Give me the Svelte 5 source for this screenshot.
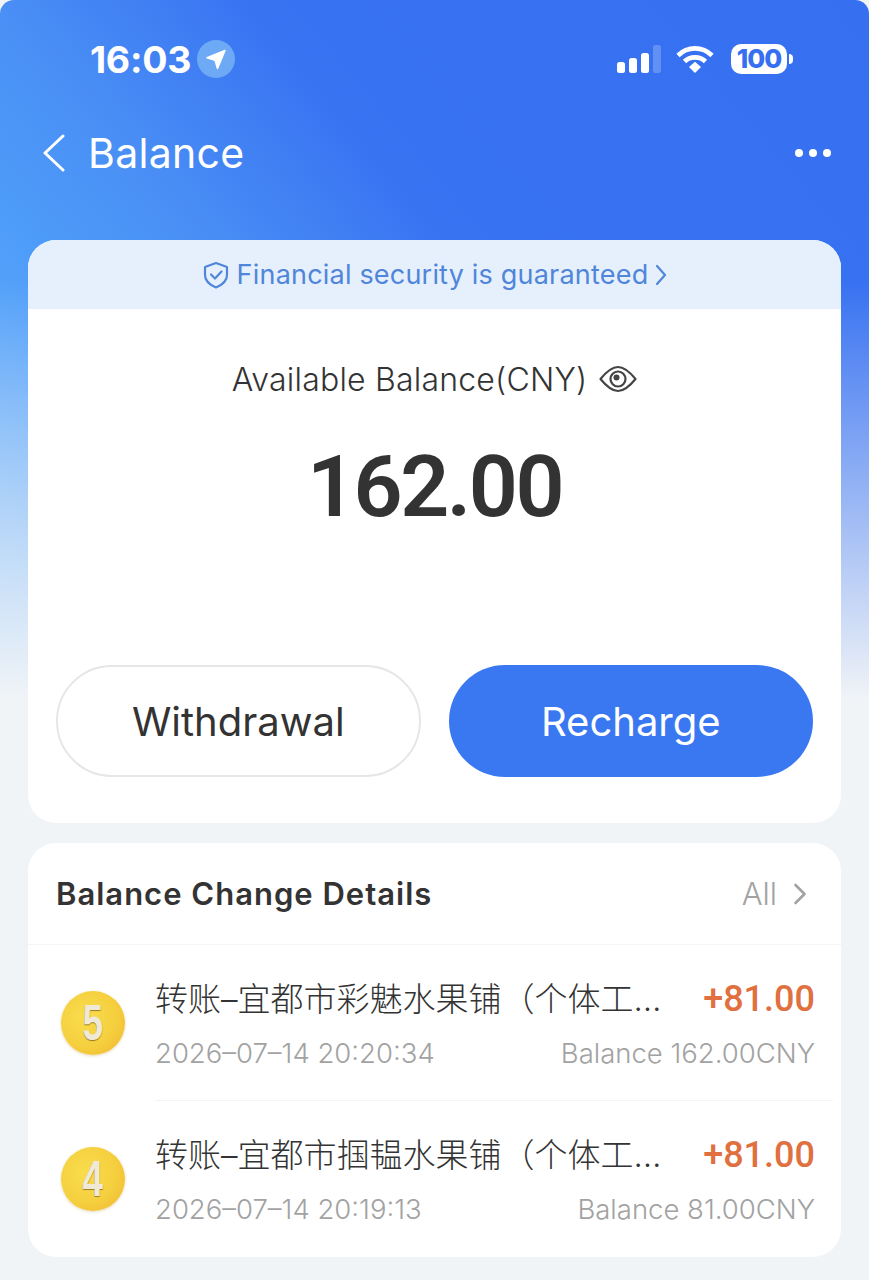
<script>
  const rows = [
    { n: '5', title: '转账–宜都市彩魅水果铺（个体工…', amount: '+81.00', time: '2026–07–14 20:20:34', bal: 'Balance 162.00CNY' },
    { n: '4', title: '转账–宜都市掴韫水果铺（个体工…', amount: '+81.00', time: '2026–07–14 20:19:13', bal: 'Balance 81.00CNY' }
  ];
</script>

<div class="page">
  <div class="status">
    <div class="left">
      <span class="time">16:03</span>
      <span class="loc">
        <svg width="38" height="38" viewBox="0 0 38 38"><circle cx="19" cy="19" r="19" fill="#6ea9f6"/><path d="M28 10.5 L10 17.8 L18 20.2 L20.5 28.5 Z" fill="#fff" stroke="#fff" stroke-width="1.5" stroke-linejoin="round"/></svg>
      </span>
    </div>
    <div class="right">
      <svg class="signal" width="44" height="28" viewBox="0 0 44 28">
        <rect x="0" y="17" width="8" height="11" rx="2.5" fill="#fff"/>
        <rect x="12" y="13" width="8" height="15" rx="2.5" fill="#fff"/>
        <rect x="24" y="8" width="8" height="20" rx="2.5" fill="#fff"/>
        <rect x="36" y="0" width="8" height="28" rx="2.5" fill="#fff" opacity=".22"/>
      </svg>
      <svg class="wifi" width="38" height="28" viewBox="0 0 38 28" fill="none" stroke="#fff" stroke-width="4.6">
        <path d="M2 10.5 C11.5 1 26.5 1 36 10.5"/>
        <path d="M8.5 16.5 C14 11 24 11 29.5 16.5"/>
        <path d="M13 22 L19 16.8 L25 22 L19 28 Z" fill="#fff" stroke="none"/>
      </svg>
      <div class="battery"><span>100</span></div>
      <span class="nub"></span>
    </div>
  </div>

  <div class="nav">
    <svg class="back" width="24" height="38" viewBox="0 0 24 38" fill="none" stroke="#fff" stroke-width="3" stroke-linecap="round" stroke-linejoin="round"><path d="M21 2 L3 19 L21 36"/></svg>
    <h1>Balance</h1>
    <div class="dots"><i></i><i></i><i></i></div>
  </div>

  <section class="card main">
    <div class="banner">
      <svg width="28" height="28" viewBox="0 0 28 28" fill="none" stroke="#4f86da" stroke-width="2.2" stroke-linejoin="round" stroke-linecap="round">
        <path d="M14 2 L25 6 V14 C25 20 20 24 14 26.5 C8 24 3 20 3 14 V6 Z"/>
        <path d="M9 13.5 L13 17.5 L19.5 10.5"/>
      </svg>
      <span>Financial security is guaranteed</span>
      <svg width="12" height="22" viewBox="0 0 12 22" fill="none" stroke="#4f86da" stroke-width="2.2" stroke-linecap="round" stroke-linejoin="round"><path d="M2 2 L10 11 L2 20"/></svg>
    </div>

    <div class="label">
      <span>Available Balance(CNY)</span>
      <svg width="38" height="30" viewBox="0 0 38 30" fill="none" stroke="#444" stroke-width="2.2" stroke-linejoin="round">
        <path d="M1.5 15 C8 7 14 3 19 3 C24 3 30 7 36.5 15 C30 23 24 27 19 27 C14 27 8 23 1.5 15 Z"/>
        <circle cx="19" cy="15" r="7.5"/>
        <circle cx="17.5" cy="13.5" r="3" fill="#444" stroke="none"/>
      </svg>
    </div>

    <div class="amount">162.00</div>

    <div class="actions">
      <button class="ghost">Withdrawal</button>
      <button class="solid">Recharge</button>
    </div>
  </section>

  <section class="card details">
    <div class="head">
      <h2>Balance Change Details</h2>
      <div class="all">
        <span>All</span>
        <svg width="14" height="24" viewBox="0 0 14 24" fill="none" stroke="#a2a2a2" stroke-width="2.6" stroke-linecap="round" stroke-linejoin="round"><path d="M2.5 3 L11.5 12 L2.5 21"/></svg>
      </div>
    </div>
    {#each rows as r, i}
      <div class="row">
        <div class="coin"><span>{r.n}</span></div>
        <div class="body" class:last={i === rows.length - 1}>
          <div class="line">
            <span class="title">{r.title}</span>
            <span class="plus">{r.amount}</span>
          </div>
          <div class="line sub">
            <span>{r.time}</span>
            <span>{r.bal}</span>
          </div>
        </div>
      </div>
    {/each}
  </section>
</div>

<style>
  :global(body) {
    margin: 0;
    background: #f1f4f7;
  }
  .page {
    box-sizing: border-box;
    width: 869px;
    height: 1280px;
    overflow: hidden;
    border-radius: 14px 14px 0 0;
    font-family: Inter, "Noto Sans CJK SC", sans-serif;
    color: #333;
    background:
      linear-gradient(180deg, rgba(241,244,247,0) 280px, rgba(241,244,247,1) 700px),
      linear-gradient(50deg, #6ab0fa 10%, #4d9cf9 31%, #4a8ff5 42%, #3873f2 59%, #3670f1 100%);
    background-size: 100% 100%, 100% 760px;
    background-repeat: no-repeat;
    background-color: #f1f4f7;
  }

  .status {
    height: 38px;
    padding: 40px 76px 0 90px;
    display: flex;
    align-items: center;
    justify-content: space-between;
    color: #fff;
  }
  .left { display: flex; align-items: center; gap: 6px; }
  .time { font-size: 37.5px; font-weight: 700; letter-spacing: -0.3px; }
  .loc { display: flex; }
  .right { display: flex; align-items: center; }
  .signal { margin-right: 15px; }
  .wifi { margin-right: 17px; }
  .battery {
    width: 56px;
    height: 30px;
    border-radius: 10px;
    background: #fff;
    display: flex;
    align-items: center;
    justify-content: center;
  }
  .battery span {
    color: #3670f0;
    font-size: 26px;
    font-weight: 800;
    letter-spacing: -1px;
    line-height: 30px;
  }
  .nub {
    width: 4px;
    height: 10px;
    margin-left: 2px;
    border-radius: 0 5px 5px 0;
    background: #fff;
  }

  .nav {
    height: 44px;
    margin-top: 53px;
    padding: 0 38px 0 42px;
    display: flex;
    align-items: center;
    color: #fff;
  }
  .back { margin-right: 22px; }
  h1 {
    margin: 0;
    flex: 1;
    font-size: 41px;
    font-weight: 400;
    letter-spacing: 0.3px;
  }
  .dots { display: flex; gap: 6px; }
  .dots i { width: 8px; height: 8px; border-radius: 50%; background: #fff; }

  .card {
    margin: 0 28px;
    background: #fff;
    border-radius: 28px;
    overflow: hidden;
  }
  .main {
    height: 583px;
    margin-top: 65px;
    display: flex;
    flex-direction: column;
  }
  .banner {
    height: 69px;
    flex: none;
    background: #e6effc;
    color: #4f86da;
    display: flex;
    align-items: center;
    justify-content: center;
    gap: 7px;
    font-size: 27px;
    letter-spacing: 0.2px;
  }
  .label {
    margin-top: 50px;
    height: 40px;
    display: flex;
    align-items: center;
    justify-content: center;
    gap: 12px;
    font-size: 32px;
    font-weight: 300;
    letter-spacing: 0.2px;
    color: #333;
  }
  .amount {
    margin-top: 48px;
    height: 80px;
    line-height: 80px;
    text-align: center;
    font-family: Roboto, sans-serif;
    font-size: 86px;
    font-weight: 600;
    letter-spacing: -2.5px;
    color: #333;
  }
  .actions {
    margin-top: 138px;
    padding: 0 28px;
    display: grid;
    grid-template-columns: 1fr 1fr;
    gap: 28px;
  }
  button {
    height: 112px;
    border-radius: 56px;
    font-family: inherit;
    font-size: 40px;
    font-weight: 400;
    padding: 0;
  }
  .ghost {
    background: #fff;
    border: 2px solid #e6e6e6;
    color: #333;
  }
  .solid {
    background: #3a78f2;
    border: 0;
    color: #fff;
  }

  .details { margin-top: 20px; height: 414px; }
  .head {
    height: 102px;
    box-sizing: border-box;
    padding: 0 34px 0 28px;
    display: flex;
    align-items: center;
    justify-content: space-between;
    border-bottom: 1px solid #f3f4f5;
  }
  h2 {
    margin: 0;
    font-size: 31px;
    font-weight: 600;
    letter-spacing: 1px;
    color: #333;
  }
  .all {
    display: flex;
    align-items: center;
    gap: 16px;
    font-size: 31px;
    color: #a2a2a2;
    font-weight: 300;
  }
  .row {
    height: 156px;
    padding-left: 33px;
    display: flex;
    align-items: center;
    gap: 30px;
  }
  .coin {
    width: 64px;
    height: 64px;
    flex: none;
    border-radius: 50%;
    background: radial-gradient(circle at 38% 40%, #f9dd4d 0, #f5cf3e 55%, #efb52f 100%);
    box-shadow: 0 1px 3px rgba(170, 130, 30, .3);
    display: flex;
    align-items: center;
    justify-content: center;
  }
  .coin span {
    font-family: "Liberation Sans", sans-serif;
    font-weight: 700;
    font-size: 50px;
    line-height: 1;
    color: #efe9d6;
    transform: scaleX(.74);
    text-shadow: 0 1px 1px #9c7c24;
  }
  .body {
    flex: 1;
    min-width: 0;
    height: 100%;
    box-sizing: border-box;
    padding: 33px 18px 0 0;
    margin-right: 8px;
    border-bottom: 1px solid #f3f4f5;
    display: flex;
    flex-direction: column;
    gap: 18px;
  }
  .body.last { border-bottom: 0; }
  .line {
    display: flex;
    align-items: center;
    justify-content: space-between;
    height: 38px;
  }
  .title {
    font-size: 33px;
    font-weight: 300;
    color: #333;
    white-space: nowrap;
  }
  .plus {
    font-family: Roboto, sans-serif;
    font-size: 36px;
    font-weight: 500;
    color: #e07040;
    transform: translateY(2px);
  }
  .sub {
    font-size: 27.5px;
    font-weight: 300;
    color: #a2a2a2;
  }
</style>
